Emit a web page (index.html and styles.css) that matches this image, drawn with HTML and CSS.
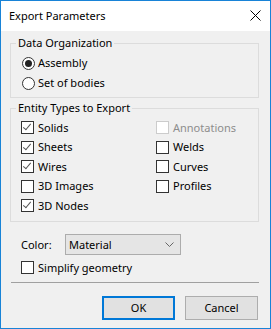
FILE: index.html
```html
<!DOCTYPE html>
<html>
<head>
  <title>Export Parameters</title>
  <link rel="stylesheet" href="styles.css">
</head>
<body>
  <div class="dialog">
    <div class="titlebar">
      <span class="title">Export Parameters</span>
      <svg class="close" width="11" height="11" viewBox="0 0 11 11">
        <path d="M0.5 0.5 L10.5 10.5 M10.5 0.5 L0.5 10.5" stroke="#000" stroke-width="1" fill="none"/>
      </svg>
    </div>
    <div class="content">
      <fieldset class="group">
        <legend>Data Organization</legend>
        <label class="opt"><span class="radio checked"></span>Assembly</label>
        <label class="opt"><span class="radio"></span>Set of bodies</label>
      </fieldset>

      <fieldset class="group entities">
        <legend>Entity Types to Export</legend>
        <div class="grid">
          <label class="opt"><span class="check on"></span>Solids</label>
          <label class="opt disabled"><span class="check"></span>Annotations</label>
          <label class="opt"><span class="check on"></span>Sheets</label>
          <label class="opt"><span class="check"></span>Welds</label>
          <label class="opt"><span class="check on"></span>Wires</label>
          <label class="opt"><span class="check"></span>Curves</label>
          <label class="opt"><span class="check"></span>3D Images</label>
          <label class="opt"><span class="check"></span>Profiles</label>
          <label class="opt"><span class="check on"></span>3D Nodes</label>
        </div>
      </fieldset>

      <div class="color-row">
        <span class="color-label">Color:</span>
        <div class="select">
          <span>Material</span>
          <svg width="9" height="5" viewBox="0 0 9 5">
            <path d="M0.5 0.5 L4.5 4.5 L8.5 0.5" stroke="#666" stroke-width="1" fill="none"/>
          </svg>
        </div>
      </div>

      <label class="opt simplify"><span class="check"></span>Simplify geometry</label>

      <div class="sep"></div>

      <div class="buttons">
        <button class="btn default">OK</button>
        <button class="btn">Cancel</button>
      </div>
    </div>
  </div>
</body>
</html>
```

FILE: styles.css
```css
html, body {
  margin: 0;
  padding: 0;
}

body {
  font-family: "Segoe UI", "Noto Sans", sans-serif;
  font-size: 11px;
  color: #000;
  background: #fff;
}

.dialog {
  box-sizing: border-box;
  width: 271px;
  height: 329px;
  border: 1px solid #1883d7;
  background: #f0f0f0;
  display: flex;
  flex-direction: column;
}

.titlebar {
  height: 30px;
  background: #fff;
  display: flex;
  align-items: center;
  justify-content: space-between;
  padding: 0 9px 0 8px;
}

.title {
  font-size: 11px;
  line-height: 16px;
}

.close {
  display: block;
  margin-top: -1px;
}

.content {
  padding: 0 11px 0 9px;
  display: flex;
  flex-direction: column;
}

.group {
  margin: 4px 0 0 0;
  padding: 2px 8px 4px 10px;
  border: 1px solid #dcdcdc;
  min-width: 0;
}

.group legend {
  padding: 0 2px;
  margin-left: -5px;
  line-height: 16px;
}

.entities {
  margin-top: 2px;
  padding-bottom: 5px;
}

.grid {
  display: grid;
  grid-template-columns: 135px auto;
  grid-auto-rows: 19.5px;
}

.opt {
  display: flex;
  align-items: center;
  height: 20px;
  line-height: 16px;
}

.grid .opt {
  height: auto;
}

.radio {
  box-sizing: border-box;
  width: 13px;
  height: 13px;
  border: 1px solid #333;
  border-radius: 50%;
  background: #fff;
  margin: 0 3px 0 1px;
  display: flex;
  align-items: center;
  justify-content: center;
}

.radio.checked::after {
  content: "";
  width: 7px;
  height: 7px;
  border-radius: 50%;
  background: #222;
}

.check {
  box-sizing: border-box;
  width: 13px;
  height: 13px;
  border: 1px solid #333;
  background: #fff;
  margin-right: 4px;
  position: relative;
}

.check.on::after {
  content: "";
  position: absolute;
  left: 3px;
  top: 0px;
  width: 3px;
  height: 7px;
  border: solid #555;
  border-width: 0 1px 1px 0;
  transform: rotate(40deg);
}

.opt.disabled {
  color: #8d8d8d;
}

.opt.disabled .check {
  border-color: #cccccc;
}

.color-row {
  display: flex;
  align-items: center;
  margin-top: 12px;
  padding-left: 11px;
}

.color-label {
  width: 44px;
}

.select {
  box-sizing: border-box;
  width: 116px;
  height: 21px;
  border: 1px solid #acacac;
  background: #e5e5e5;
  display: flex;
  align-items: center;
  justify-content: space-between;
  padding: 0 6px 0 3px;
}

.simplify {
  margin-top: 3px;
  padding-left: 11px;
}

.sep {
  height: 1px;
  background: #a0a0a0;
  margin-top: 4px;
  margin-left: 1px;
}

.buttons {
  display: flex;
  justify-content: flex-end;
  gap: 10px;
  margin-top: 13px;
  padding-right: 1px;
}

.btn {
  box-sizing: border-box;
  width: 73px;
  height: 24px;
  font-family: inherit;
  font-size: 11px;
  color: #000;
  background: #e1e1e1;
  border: 1px solid #adadad;
  border-radius: 0;
  padding: 0;
}

.btn.default {
  border: 2px solid #0078d7;
}
```
